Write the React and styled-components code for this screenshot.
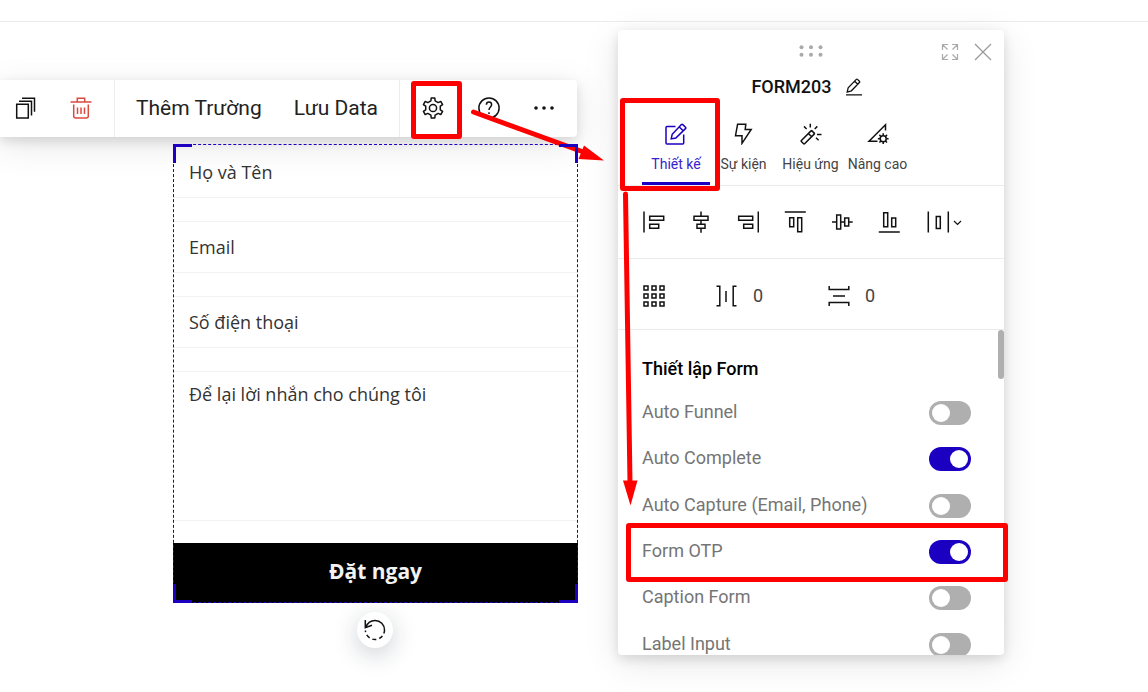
import { useState } from 'react';
import styled, { createGlobalStyle } from 'styled-components';

const primary = '#1c00c2';
const red = '#ff0000';
const line = '#ececec';

const GlobalStyle = createGlobalStyle`
    *, *::before, *::after {
        box-sizing: border-box;
    }
    body {
        margin: 0;
        background: #fff;
        color: #111;
        font-family: Roboto, "Liberation Sans", sans-serif;
        overflow: hidden;
    }
    button, input, textarea {
        font: inherit;
        color: inherit;
    }
`

const TopBar = styled.header`
    height: 22px;
    border-bottom: 1px solid ${line};
`
const Workspace = styled.main`
    display: flex;
    align-items: flex-start;
    gap: 40px;
    padding: 8px 144px 37px 0;
`
const Editor = styled.section`
    flex: 1;
    min-width: 0;
    padding-top: 50px;
`

const Toolbar = styled.div`
    display: flex;
    height: 57px;
    margin-right: 1px;
    background: #fff;
    border-radius: 0 4px 4px 0;
    box-shadow: 0 4px 12px rgba(0, 0, 0, 0.12), 0 8px 36px rgba(0, 0, 0, 0.1);
`
const ToolGroup = styled.div`
    display: flex;
    align-items: center;
    gap: 34px;
    padding: ${p => p.$first ? '0 22px 2px 14px' : '0 21px 2px 22px'};
`
const TextGroup = styled.div`
    flex: 1;
    display: flex;
    align-items: center;
    justify-content: space-between;
    padding: 0 21px 2px;
    border-left: 1px solid ${line};
    border-right: 1px solid ${line};
`
const IconButton = styled.button`
    position: relative;
    display: flex;
    padding: 0;
    border: 0;
    background: none;
    color: ${p => p.$color || '#111'};
    cursor: pointer;
`
const TextButton = styled.button`
    padding: 0;
    border: 0;
    background: none;
    font-size: 21px;
    line-height: 24px;
    color: #222;
    white-space: nowrap;
    cursor: pointer;
`

const Form = styled.form`
    position: relative;
    display: flex;
    flex-direction: column;
    gap: 23px;
    margin: 7px 0 0 173px;
    padding-top: 2px;
    font-family: "Open Sans", "Noto Sans", sans-serif;

    &::after {
        content: '';
        position: absolute;
        inset: 0;
        border: 1px dashed ${primary};
        pointer-events: none;
    }
`
const Field = styled.input`
    width: 100%;
    height: 52px;
    padding: 0 16px;
    border: 0;
    border-top: 1px solid ${p => p.$first ? 'transparent' : '#f2f2f2'};
    border-bottom: 1px solid #f2f2f2;
    background: none;
    font-size: 18px;
    outline: none;

    &::placeholder {
        color: #333;
        opacity: 1;
    }
`
const Message = styled(Field)`
    display: block;
    height: 150px;
    padding: 10px 16px;
    line-height: 24px;
    resize: none;
`
const Submit = styled.button`
    height: 60px;
    margin-top: -1px;
    padding: 0 0 4px;
    border: 0;
    background: #000;
    color: #f2f2f2;
    font-size: 21px;
    font-weight: 700;
`
const Corner = styled.span`
    position: absolute;
    z-index: 1;
    ${p => p.$y}: 0;
    ${p => p.$x}: 0;
    width: 19px;
    height: 19px;
    border: 0 solid ${primary};
    border-${p => p.$y}-width: 3px;
    border-${p => p.$x}-width: 3px;
    pointer-events: none;
`
const RotateRow = styled.div`
    display: flex;
    justify-content: center;
    padding: 9px 0 0 171px;
`
const RotateButton = styled.button`
    display: flex;
    align-items: center;
    justify-content: center;
    width: 36px;
    height: 36px;
    padding: 0;
    border: 0;
    border-radius: 50%;
    background: #fff;
    box-shadow: 0 6px 24px rgba(20, 30, 50, 0.22);
`

const Panel = styled.aside`
    position: relative;
    flex: 0 0 386px;
    background: #fff;
    border-radius: 4px;
    box-shadow: 0 4px 12px rgba(0, 0, 0, 0.12), 0 8px 36px rgba(0, 0, 0, 0.1);
`
const PanelTop = styled.div`
    display: grid;
    grid-template-columns: 1fr auto 1fr;
    align-items: center;
    height: 44px;
    padding: 0 12px;
`
const PanelActions = styled.div`
    grid-column: 3;
    display: flex;
    justify-content: flex-end;
    gap: 15px;
`
const DragHandle = styled.div`
    grid-column: 2;
    display: flex;
    padding-bottom: 3px;
    color: #aaa;
`
const TitleRow = styled.div`
    display: flex;
    align-items: center;
    justify-content: center;
    gap: 13px;
    height: 26px;
    padding-right: 8px;
`
const Title = styled.h1`
    margin: 0;
    font-size: 18px;
    line-height: 24px;
    font-weight: 500;
`
const Tabs = styled.nav`
    display: flex;
    height: 86px;
    padding: 19px 24px 0;
    border-bottom: 1px solid ${line};
`
const Tab = styled.button`
    display: flex;
    flex-direction: column;
    align-items: center;
    gap: 10px;
    flex: 0 0 67px;
    padding: 4px 0 0;
    border: 0;
    border-bottom: 3px solid ${p => p.$active ? primary : 'transparent'};
    background: none;
    color: ${p => p.$active ? primary : '#111'};
    white-space: nowrap;
    cursor: pointer;

    &:first-child {
        flex-basis: 68px;
    }
`
const TabLabel = styled.span`
    font-size: 14px;
    line-height: 18px;
    color: ${p => p.$active ? '#3a22cc' : '#444'};
`
const AlignRow = styled.div`
    display: flex;
    align-items: center;
    gap: 25px;
    height: 73px;
    padding: 0 25px;
    border-bottom: 1px solid ${line};
`
const SpacingRow = styled(AlignRow)`
    gap: 51px;
    height: 71px;
    padding-top: 4px;
`
const SpacingFields = styled.div`
    display: grid;
    grid-template-columns: 112px 112px;
`
const SpacingField = styled.label`
    display: flex;
    align-items: center;
    gap: 15px;
`
const NumberInput = styled.input`
    width: 40px;
    padding: 0;
    border: 0;
    background: none;
    font-size: 18px;
    line-height: 24px;
    color: #444;
    outline: none;
`
const Settings = styled.div`
    position: relative;
    height: 325px;
    padding: 26px 33px 0 24px;
    border-radius: 0 0 4px 4px;
    overflow: hidden;
`
const ScrollThumb = styled.div`
    position: absolute;
    top: 0;
    right: 0;
    width: 6px;
    height: 49px;
    border-radius: 3px;
    background: #afafaf;
`
const SectionTitle = styled.h2`
    margin: 0;
    height: 34px;
    font-size: 18px;
    line-height: 26px;
    font-weight: 500;
    color: #000;
`
const SwitchList = styled.div`
    display: grid;
    grid-auto-rows: 1fr;
    height: 278px;
`
const SwitchRow = styled.label`
    display: flex;
    align-items: center;
    justify-content: space-between;
    color: #757575;
`
const SwitchName = styled.span`
    padding-bottom: 2px;
    font-size: 18px;
    line-height: 24px;
`
const Switch = styled.input`
    appearance: none;
    display: flex;
    align-items: center;
    width: 42px;
    height: 24px;
    margin: 0;
    padding: 0 3px;
    border-radius: 12px;
    background: #afafaf;

    &::before {
        content: '';
        width: 18px;
        height: 18px;
        border-radius: 50%;
        background: #fff;
    }
    &:checked {
        justify-content: flex-end;
        background: ${primary};
    }
`

// red markers over the screen
const Mark = styled.span`
    position: absolute;
    border: 5px solid ${red};
    border-radius: 3px;
    pointer-events: none;
`
const GearMark = styled(Mark)`
    inset: -16px -18px -20px -11px;
`
const TabMark = styled(Mark)`
    left: 2px;
    top: 68px;
    width: 100px;
    height: 93px;
`
const OtpMark = styled(Mark)`
    left: 8px;
    right: -4px;
    top: 493px;
    height: 59px;
`
const Arrows = styled.svg`
    position: absolute;
    left: -150px;
    top: 70px;
    pointer-events: none;
`

function Icon({ w = 22, h = 22, sw = 1.5, children }) {
    return (
        <svg width={w} height={h} viewBox={`0 0 ${w} ${h}`} fill="none" stroke="currentColor" strokeWidth={sw} aria-hidden="true">
            {children}
        </svg>
    )
}

function cog(cx, cy, outer, inner, teeth) {
    const points = []
    const step = 360 / teeth
    const at = (deg, r) => {
        const a = (deg * Math.PI) / 180
        points.push(`${(cx + r * Math.cos(a)).toFixed(2)},${(cy + r * Math.sin(a)).toFixed(2)}`)
    }
    for (let i = 0; i < teeth; i++) {
        const mid = i * step - 90
        at(mid - step * 0.27, inner)
        at(mid - step * 0.17, outer)
        at(mid + step * 0.17, outer)
        at(mid + step * 0.27, inner)
    }
    return points.join(' ')
}

const CopyIcon = () => (
    <Icon>
        <path d="M2.7 7.2h11.6v13.7H2.7zM5 4.2h12.5v14.3M8 1.2h12.5v13.5" />
    </Icon>
)
const TrashIcon = () => (
    <Icon>
        <path d="M.5 5h21M7.3 5V1.3h7.4V5M3.7 7.5v11.6q0 2 2 2h10.6q2 0 2-2V7.5M7.5 10.5V17M11 10.5V17M14.5 10.5V17" />
    </Icon>
)
const GearIcon = () => (
    <Icon>
        <polygon points={cog(11, 11, 10.2, 7.5, 6)} strokeLinejoin="round" />
        <circle cx="11" cy="11" r="3.6" />
    </Icon>
)
const HelpIcon = () => (
    <Icon>
        <circle cx="11" cy="11" r="10.1" />
        <path d="M8.4 7.8c0-1.6 1.1-2.7 2.6-2.7s2.6 1 2.6 2.6c0 2.1-2.6 2.5-2.6 5.3M11 15.2v1.7" />
    </Icon>
)
const MoreIcon = () => (
    <Icon>
        <g fill="currentColor" stroke="none">
            <circle cx="2" cy="11" r="1.8" />
            <circle cx="10" cy="11" r="1.8" />
            <circle cx="18" cy="11" r="1.8" />
        </g>
    </Icon>
)
const RotateIcon = () => (
    <Icon>
        <path d="M2 8C3.5 4 6.9 1.5 11 1.5C16.5 1.5 20.5 5.7 20.5 11C20.5 12.5 20.2 13.6 19.8 14.5" />
        <path d="M1.3 1v7.6L8 6.2" />
        <path d="M18.4 17A9.6 9.6 0 0 1 1.4 11.5" strokeDasharray="4 3" />
    </Icon>
)
const DragIcon = () => (
    <Icon w={24} h={12}>
        <g fill="currentColor" stroke="none">
            {[2.5, 12, 21.5].map(x => [2.2, 9.8].map(y => <circle key={`${x}-${y}`} cx={x} cy={y} r="2" />))}
        </g>
    </Icon>
)
const ExpandIcon = () => (
    <Icon w={18} h={18} sw={1.2}>
        <path d="M1.5 7V1.5H7M11 1.5h5.5V7M16.5 11v5.5H11M7 16.5H1.5V11M1.5 1.5l5 5M16.5 1.5l-5 5M16.5 16.5l-5-5M1.5 16.5l5-5" />
    </Icon>
)
const CloseIcon = () => (
    <Icon w={18} h={18} sw={1.2}>
        <path d="M1 1l16 16M17 1L1 17" />
    </Icon>
)
const PencilIcon = () => (
    <Icon w={18} h={18} sw={1.3}>
        <path d="M2.2 14l1-4.3L11.3 1.4q.6-.6 1.2 0l1.9 1.9q.6.6 0 1.2L6.4 12.8zM9.7 3.2l3 3M1 16.8h16" />
    </Icon>
)
const EditIcon = () => (
    <Icon>
        <path d="M10.5 3.4H2q-1 0-1 1v15.7q0 1 1 1h15.7q1 0 1-1V11.5" />
        <path d="M6.2 15.9l1-4.6 9.2-9.7q.7-.7 1.4 0l2.7 2.6q.7.7 0 1.4l-9.7 9.4zM14.3 4l3.9 3.8" />
    </Icon>
)
const BoltIcon = () => (
    <Icon>
        <path d="M4.6 1.2h8.2l-.6 5.3h6L9 20.3V12.7H2.5z" />
    </Icon>
)
const WandIcon = () => (
    <Icon>
        <path d="M1.4 17.5L11 7.9q.5-.5 1 0l2.2 2.2q.5.5 0 1L4.6 20.7q-.5.5-1 0l-2.2-2.2q-.5-.5 0-1zM8.4 10.5l3.2 3.2" />
        <path d="M10.3.8v3.7M4 3.4l2.6 2.6M17.3 3.4L14.7 6M17 11.5h4.5M16 14.8l2.6 2.4" />
    </Icon>
)
const AdvancedIcon = () => (
    <Icon>
        <path d="M18.5 7.5V1.8L2 18.2h8.5" />
        <circle cx="16.2" cy="15.7" r="3" />
        {[0, 45, 90, 135, 180, 225, 270, 315].map(a => (
            <path key={a} d="M16.2 12.5v-2.2" transform={`rotate(${a} 16.2 15.7)`} />
        ))}
    </Icon>
)

const alignments = [
    { label: 'Align left', d: 'M1 .5v21M6.7 5.2h14v4h-14zM6.7 13.2h9v4h-9z' },
    { label: 'Align center', d: 'M4 5.2h14v4H4zM7 13.2h8v4H7zM11 .5v4.7M11 9.2v4M11 17.2v4.5' },
    { label: 'Align right', d: 'M21.3 .5v21M1.7 5.2h14v4h-14zM6.7 13.2h9v4h-9z' },
    { label: 'Align top', d: 'M.8 1h21M5.7 6.7h4v9h-4zM13.7 6.7h4v14h-4z' },
    { label: 'Align middle', d: 'M5.7 4h4v14h-4zM13.7 7h4v8h-4zM1 11h4.7M9.7 11h4M17.7 11h4' },
    { label: 'Align bottom', d: 'M.8 21h21M5.7 1.7h4v14h-4zM13.7 7h4v8.7h-4z' },
    { label: 'Distribute', d: 'M3.3 .5v21M23.3 .5v21M11.3 5.5h4v12h-4z', w: 38, extra: 'M29 10l3.5 3.5 3.5-3.5' },
]

const tabs = [
    { label: 'Thiết kế', icon: <EditIcon /> },
    { label: 'Sự kiện', icon: <BoltIcon /> },
    { label: 'Hiệu ứng', icon: <WandIcon /> },
    { label: 'Nâng cao', icon: <AdvancedIcon /> },
]

const options = [
    'Auto Funnel',
    'Auto Complete',
    'Auto Capture (Email, Phone)',
    'Form OTP',
    'Caption Form',
    'Label Input',
]

function FormEditor() {
    return (
        <Editor>
            <Toolbar>
                <ToolGroup $first>
                    <IconButton aria-label="Copy"><CopyIcon /></IconButton>
                    <IconButton aria-label="Delete" $color="#db4a3f"><TrashIcon /></IconButton>
                </ToolGroup>
                <TextGroup>
                    <TextButton>Thêm Trường</TextButton>
                    <TextButton>Lưu Data</TextButton>
                </TextGroup>
                <ToolGroup>
                    <IconButton aria-label="Settings">
                        <GearIcon />
                        <GearMark />
                    </IconButton>
                    <IconButton aria-label="Help"><HelpIcon /></IconButton>
                    <IconButton aria-label="More"><MoreIcon /></IconButton>
                </ToolGroup>
            </Toolbar>
            <Form onSubmit={e => e.preventDefault()}>
                <Field $first aria-label="Họ và Tên" placeholder="Họ và Tên" />
                <Field aria-label="Email" placeholder="Email" />
                <Field aria-label="Số điện thoại" placeholder="Số điện thoại" />
                <Message as="textarea" aria-label="Để lại lời nhắn cho chúng tôi" placeholder="Để lại lời nhắn cho chúng tôi" />
                <Submit>Đặt ngay</Submit>
                <Corner $y="top" $x="left" />
                <Corner $y="top" $x="right" />
                <Corner $y="bottom" $x="left" />
                <Corner $y="bottom" $x="right" />
            </Form>
            <RotateRow>
                <RotateButton aria-label="Rotate"><RotateIcon /></RotateButton>
            </RotateRow>
        </Editor>
    )
}

function SettingsPanel() {
    const [tab, setTab] = useState('Thiết kế')
    const [on, setOn] = useState({ 'Auto Complete': true, 'Form OTP': true })

    return (
        <Panel>
            <PanelTop>
                <DragHandle><DragIcon /></DragHandle>
                <PanelActions>
                    <IconButton aria-label="Expand" $color="#aaa"><ExpandIcon /></IconButton>
                    <IconButton aria-label="Close" $color="#999"><CloseIcon /></IconButton>
                </PanelActions>
            </PanelTop>
            <TitleRow>
                <Title>FORM203</Title>
                <IconButton aria-label="Rename"><PencilIcon /></IconButton>
            </TitleRow>
            <Tabs>
                {tabs.map(t => (
                    <Tab key={t.label} $active={t.label === tab} onClick={() => setTab(t.label)}>
                        {t.icon}
                        <TabLabel $active={t.label === tab}>{t.label}</TabLabel>
                    </Tab>
                ))}
            </Tabs>
            <AlignRow>
                {alignments.map(a => (
                    <IconButton key={a.label} aria-label={a.label}>
                        <Icon w={a.w}>
                            <path d={a.d} />
                            {a.extra && <path d={a.extra} strokeWidth="1.2" />}
                        </Icon>
                    </IconButton>
                ))}
            </AlignRow>
            <SpacingRow>
                <IconButton aria-label="Grid">
                    <Icon>
                        {[1, 9, 17].map(y => [1, 9, 17].map(x => <rect key={`${x}-${y}`} x={x} y={y} width="4" height="4" />))}
                    </Icon>
                </IconButton>
                <SpacingFields>
                    <SpacingField>
                        <Icon><path d="M.5 1.2h3.3v19.6H.5M10 6v11M20.5 1.2h-3.3v19.6h3.3" /></Icon>
                        <NumberInput aria-label="Horizontal spacing" defaultValue="0" />
                    </SpacingField>
                    <SpacingField>
                        <Icon><path d="M1.2 1v3.5h19.6V1M5 11h12M1.2 21v-3.5h19.6V21" /></Icon>
                        <NumberInput aria-label="Vertical spacing" defaultValue="0" />
                    </SpacingField>
                </SpacingFields>
            </SpacingRow>
            <Settings>
                <SectionTitle>Thiết lập Form</SectionTitle>
                <SwitchList>
                    {options.map(name => (
                        <SwitchRow key={name}>
                            <SwitchName>{name}</SwitchName>
                            <Switch
                                type="checkbox"
                                checked={!!on[name]}
                                onChange={e => setOn({ ...on, [name]: e.target.checked })}
                            />
                        </SwitchRow>
                    ))}
                </SwitchList>
                <ScrollThumb />
            </Settings>
            <TabMark />
            <OtpMark />
            <Arrows width="180" height="410" viewBox="0 0 180 410" fill={red} stroke={red}>
                <path d="M5.5 12L114 51.5" strokeWidth="5" strokeLinecap="round" />
                <path d="M116 45.5L136 60.5L110.500 59z" stroke="none" />
                <path d="M157.5 94L162 382" strokeWidth="5" strokeLinecap="round" />
                <path d="M155 380.5H169.5L162.5 405.5z" stroke="none" />
            </Arrows>
        </Panel>
    )
}

function App() {
    return (
        <>
            <GlobalStyle />
            <TopBar />
            <Workspace>
                <FormEditor />
                <SettingsPanel />
            </Workspace>
        </>
    )
}

export default App;
